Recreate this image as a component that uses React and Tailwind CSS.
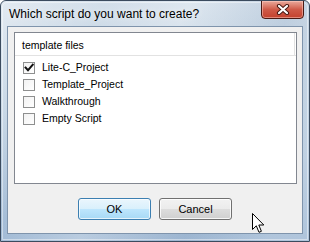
import React from "react";

function Check({ checked }) {
  return (
    <div className="w-[12px] h-[12px] border border-[#8e8f8f] bg-gradient-to-br from-[#dcdcdc] to-[#ffffff] flex items-center justify-center">
      <div className="w-[10px] h-[10px] bg-gradient-to-br from-[#f2f2f2] to-[#ffffff] relative">
        {checked && (
          <svg width="10" height="10" viewBox="0 0 10 10" className="absolute left-0 top-0">
            <path d="M1.5 4.5 L4 7.2 L8.8 1.6" fill="none" stroke="#111" strokeWidth="1.9" strokeLinecap="square" />
          </svg>
        )}
      </div>
    </div>
  );
}

function Row({ label, checked }) {
  return (
    <div className="h-[17px] flex items-center pl-[8px] gap-[7px]">
      <Check checked={checked} />
      <span className="text-[10.5px] text-black leading-none">{label}</span>
    </div>
  );
}

export default function App() {
  return (
    <div
      className="w-[310px] h-[242px] relative overflow-hidden flex flex-col rounded-t-[6px] border border-[#3b4b5e] bg-gradient-to-b from-[#d3dfea] via-[#bccfe1] to-[#a1bad5]"
      style={{ fontFamily: '"Liberation Sans", Arial, sans-serif' }}
    >
      {/* glass streaks */}
      <div className="absolute inset-0 pointer-events-none bg-[linear-gradient(115deg,rgba(255,255,255,0.35)_0%,rgba(255,255,255,0)_25%,rgba(255,255,255,0.25)_45%,rgba(140,165,195,0.25)_70%,rgba(255,255,255,0.15)_90%)]" />
      <div className="absolute inset-[1px] pointer-events-none rounded-t-[5px] border border-[rgba(255,255,255,0.45)]" />

      {/* title bar */}
      <div className="relative h-[25px] flex items-center pl-[8px] shrink-0">
        <span className="text-[12px] text-black leading-none" style={{ textShadow: "0 0 6px rgba(255,255,255,0.9)" }}>
          Which script do you want to create?
        </span>
        <div className="absolute right-[5px] top-[-1px] w-[43px] h-[19px] rounded-b-[4px] border border-[#4a1a14] bg-gradient-to-b from-[#e9a99c] via-[#cf5a48] to-[#c4412d] flex items-center justify-center shadow-[inset_0_0_0_1px_rgba(255,210,200,0.5)]">
          <svg width="14" height="11" viewBox="0 0 14 11">
            <path d="M3 2 L11 9 M11 2 L3 9" stroke="#4a1a14" strokeWidth="4.2" strokeLinecap="round" />
            <path d="M3 2 L11 9 M11 2 L3 9" stroke="#ffffff" strokeWidth="2.2" strokeLinecap="round" />
          </svg>
        </div>
      </div>

      {/* client area */}
      <div className="relative mx-[6px] h-[208px] border border-[#7f94ac] bg-[#f0f0f0] flex flex-col pt-[5px] pl-[6px]">
        <div className="w-[283px] h-[152px] border border-[#828790] bg-white flex flex-col">
          <div className="h-[23px] border-b border-[#e2e2e2] flex items-center pl-[7px] pt-[3px] relative">
            <span className="text-[10.5px] text-black leading-none">template files</span>
            <div className="absolute right-[1px] top-0 bottom-0 w-px bg-[#e2e2e2]" />
          </div>
          <div className="pt-[3px] flex flex-col">
            <Row label="Lite-C_Project" checked />
            <Row label="Template_Project" />
            <Row label="Walkthrough" />
            <Row label="Empty Script" />
          </div>
        </div>

        <div className="mt-[14px] flex justify-center gap-[8px] pr-[6px]">
          <button className="w-[73px] h-[22px] rounded-[3px] border border-[#3c7fb1] bg-[linear-gradient(to_bottom,#eaf6fd_0%,#d9f0fc_50%,#bee6fd_50%,#a7d9f5_100%)] shadow-[inset_0_0_0_1px_rgba(255,255,255,0.7)] text-[11px] text-black leading-none">
            OK
          </button>
          <button className="w-[73px] h-[22px] rounded-[3px] border border-[#707070] bg-[linear-gradient(to_bottom,#f2f2f2_0%,#ebebeb_50%,#dddddd_50%,#cfcfcf_100%)] shadow-[inset_0_0_0_1px_rgba(255,255,255,0.8)] text-[11px] text-black leading-none">
            Cancel
          </button>
        </div>
      </div>

      {/* cursor */}
      <svg className="absolute left-[251px] top-[212px]" width="13" height="21" viewBox="0 0 13 21">
        <path d="M0.5 0.5 L0.5 16.5 L4.3 12.8 L7 19.3 L9.4 18.3 L6.8 12 L11.8 12 Z" fill="#fff" stroke="#000" strokeWidth="1" strokeLinejoin="miter" />
      </svg>
    </div>
  );
}
